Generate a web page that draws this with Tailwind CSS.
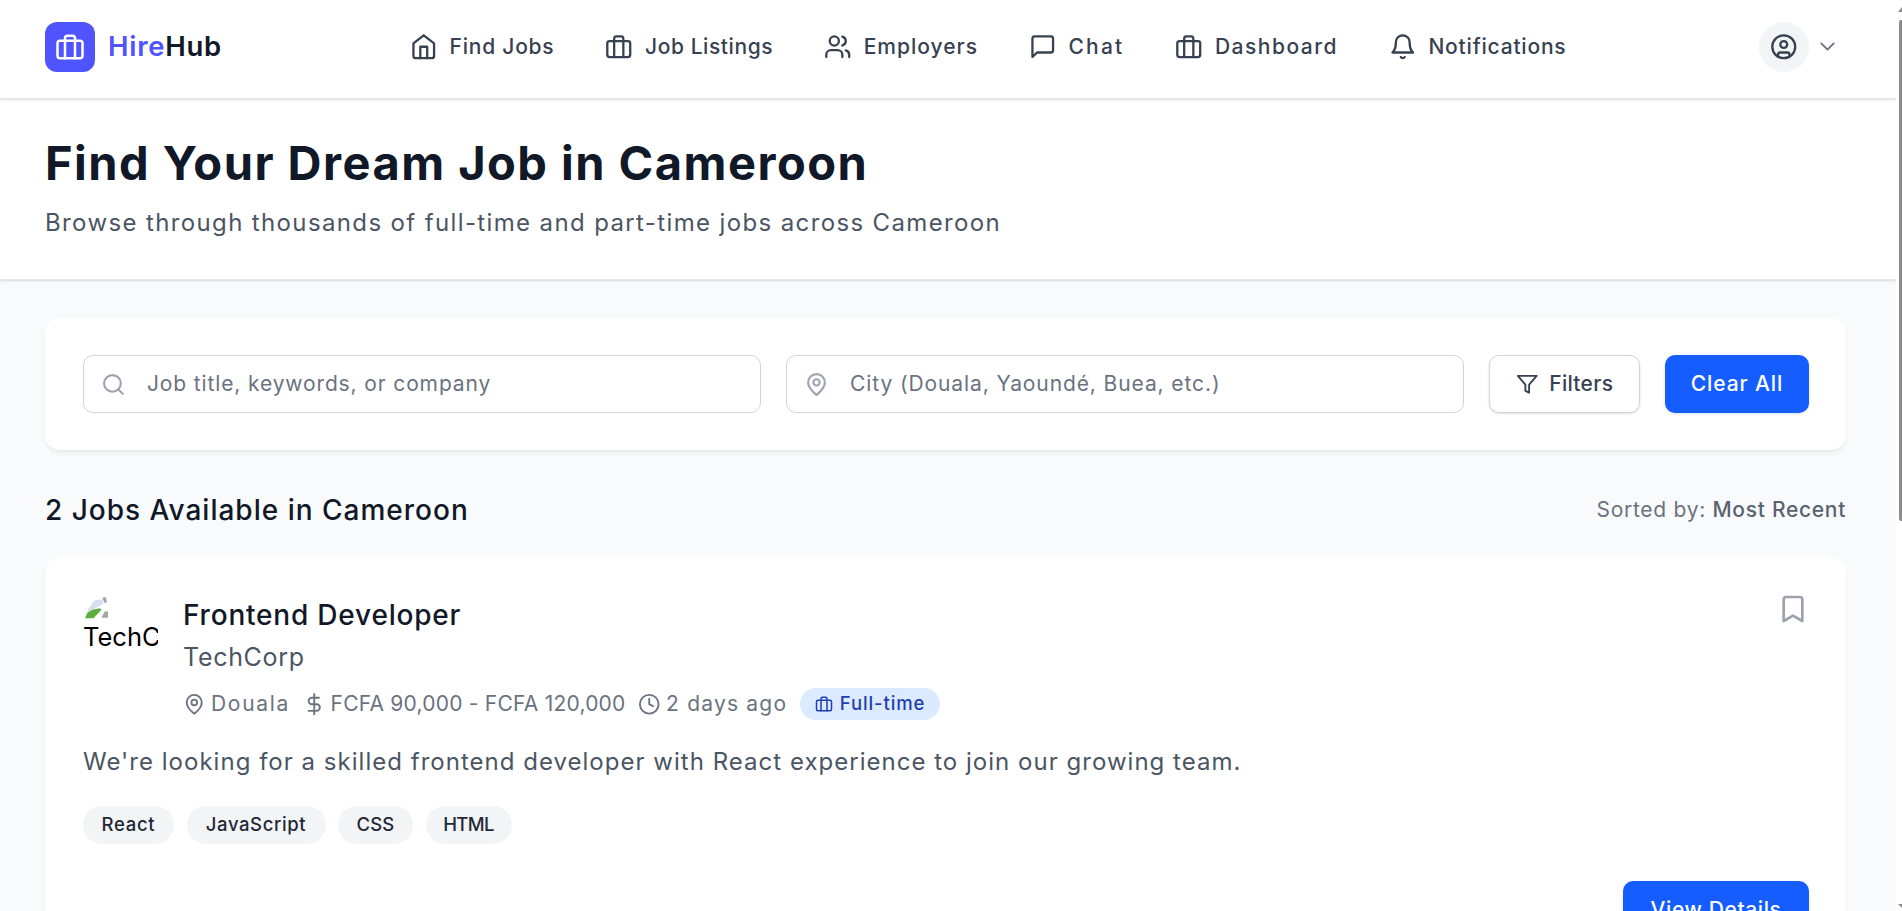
<!DOCTYPE html>
<html lang="en">
<head>
    <meta charset="UTF-8">
    <title>HireHub - Find Jobs</title>
    <script src="https://cdn.jsdelivr.net/npm/@tailwindcss/browser@4"></script>
</head>
<body class="h-[911px] overflow-hidden bg-[#f9fafb] font-['Inter',sans-serif] text-[#111827]">
<div class="flex h-[911px]">
    <div class="w-[1896px] shrink-0 overflow-hidden">
        <!-- header -->
        <header class="relative flex h-[99px] items-center border-b border-[#e5e7eb] bg-white pb-[5px] pl-[45px] pr-[56px] shadow-sm">
            <div class="flex w-[365px] items-center gap-[13px]">
                <div class="flex h-[50px] w-[50px] items-center justify-center rounded-[12px] bg-[#4f54ff] text-white">
                    <svg class="h-[30px] w-[30px]" viewBox="0 0 24 24" fill="none" stroke="currentColor" stroke-width="2" stroke-linecap="round" stroke-linejoin="round"><rect x="2" y="7" width="20" height="14" rx="2"/><path d="M16 21V5a2 2 0 0 0-2-2h-4a2 2 0 0 0-2 2v16"/></svg>
                </div>
                <span class="text-[27.5px] font-semibold tracking-[0.75px]"><span class="text-[#4f54ff]">Hire</span>Hub</span>
            </div>
            <nav class="flex items-center gap-[51px] text-[21px] font-medium text-[#374151]">
                <a class="flex items-center gap-[12px] tracking-[0.78px]">
                    <svg class="h-[27.5px] w-[27.5px]" viewBox="0 0 24 24" fill="none" stroke="currentColor" stroke-width="2" stroke-linecap="round" stroke-linejoin="round"><path d="m3 9 9-7 9 7v11a2 2 0 0 1-2 2H5a2 2 0 0 1-2-2z"/><polyline points="9 22 9 12 15 12 15 22"/></svg>
                    Find Jobs
                </a>
                <a class="flex items-center gap-[12px] tracking-[0.58px]">
                    <svg class="h-[27.5px] w-[27.5px]" viewBox="0 0 24 24" fill="none" stroke="currentColor" stroke-width="2" stroke-linecap="round" stroke-linejoin="round"><rect x="2" y="7" width="20" height="14" rx="2"/><path d="M16 21V5a2 2 0 0 0-2-2h-4a2 2 0 0 0-2 2v16"/></svg>
                    Job Listings
                </a>
                <a class="flex items-center gap-[12px] tracking-[1px]">
                    <svg class="h-[27.5px] w-[27.5px]" viewBox="0 0 24 24" fill="none" stroke="currentColor" stroke-width="2" stroke-linecap="round" stroke-linejoin="round"><path d="M16 21v-2a4 4 0 0 0-4-4H6a4 4 0 0 0-4 4v2"/><circle cx="9" cy="7" r="4"/><path d="M22 21v-2a4 4 0 0 0-3-3.87"/><path d="M16 3.13a4 4 0 0 1 0 7.75"/></svg>
                    Employers
                </a>
                <a class="flex items-center gap-[12px] tracking-[2.2px]">
                    <svg class="h-[27.5px] w-[27.5px]" viewBox="0 0 24 24" fill="none" stroke="currentColor" stroke-width="2" stroke-linecap="round" stroke-linejoin="round"><path d="M21 15a2 2 0 0 1-2 2H7l-4 4V5a2 2 0 0 1 2-2h14a2 2 0 0 1 2 2z"/></svg>
                    Chat
                </a>
                <a class="flex items-center gap-[12px] tracking-[1.5px]">
                    <svg class="h-[27.5px] w-[27.5px]" viewBox="0 0 24 24" fill="none" stroke="currentColor" stroke-width="2" stroke-linecap="round" stroke-linejoin="round"><rect x="2" y="7" width="20" height="14" rx="2"/><path d="M16 21V5a2 2 0 0 0-2-2h-4a2 2 0 0 0-2 2v16"/></svg>
                    Dashboard
                </a>
                <a class="flex items-center gap-[12px] tracking-[0.8px]">
                    <svg class="h-[27.5px] w-[27.5px]" viewBox="0 0 24 24" fill="none" stroke="currentColor" stroke-width="2" stroke-linecap="round" stroke-linejoin="round"><path d="M6 8a6 6 0 0 1 12 0c0 7 3 9 3 9H3s3-2 3-9"/><path d="M10.3 21a1.94 1.94 0 0 0 3.4 0"/></svg>
                    Notifications
                </a>
            </nav>
            <div class="ml-auto flex items-center gap-[6px] text-[#6b7280]">
                <div class="flex h-[50px] w-[50px] items-center justify-center rounded-full bg-[#f3f4f6] text-[#374151]">
                    <svg class="h-[27.5px] w-[27.5px]" viewBox="0 0 24 24" fill="none" stroke="currentColor" stroke-width="2" stroke-linecap="round" stroke-linejoin="round"><circle cx="12" cy="12" r="10"/><circle cx="12" cy="10" r="3"/><path d="M7 20.662V19a2 2 0 0 1 2-2h6a2 2 0 0 1 2 2v1.662"/></svg>
                </div>
                <svg class="h-[25px] w-[25px]" viewBox="0 0 24 24" fill="none" stroke="currentColor" stroke-width="1.8" stroke-linecap="round" stroke-linejoin="round"><path d="m6 9 6 6 6-6"/></svg>
            </div>
        </header>

        <!-- page title -->
        <section class="h-[181px] border-b border-[#e5e7eb] bg-white pl-[45px] pt-[36px] shadow-sm">
            <h1 class="text-[47px] leading-[56px] font-bold tracking-[1.47px] text-[#111827]">Find Your Dream Job in Cameroon</h1>
            <p class="mt-[16px] text-[24px] leading-[32px] tracking-[1.37px] text-[#4b5563]">Browse through thousands of full-time and part-time jobs across Cameroon</p>
        </section>

        <main class="pl-[45px] pr-[50px] pt-[38px]">
            <!-- search -->
            <div class="flex gap-[25px] rounded-[15px] bg-white py-[37px] pl-[38px] pr-[37px] shadow-md shadow-black/5">
                <div class="flex h-[58px] w-[678px] items-center gap-[21px] rounded-[10px] border border-[#d1d5db] px-[17px] text-[#9ca3af]">
                    <svg class="h-[25px] w-[25px] shrink-0" viewBox="0 0 24 24" fill="none" stroke="currentColor" stroke-width="2" stroke-linecap="round" stroke-linejoin="round"><circle cx="11" cy="11" r="8"/><path d="m21 21-4.3-4.3"/></svg>
                    <span class="text-[21px] tracking-[0.87px] text-[#6b7280]">Job title, keywords, or company</span>
                </div>
                <div class="flex h-[58px] w-[678px] items-center gap-[21px] rounded-[10px] border border-[#d1d5db] px-[17px] text-[#9ca3af]">
                    <svg class="h-[25px] w-[25px] shrink-0" viewBox="0 0 24 24" fill="none" stroke="currentColor" stroke-width="2" stroke-linecap="round" stroke-linejoin="round"><path d="M20 10c0 6-8 12-8 12s-8-6-8-12a8 8 0 0 1 16 0Z"/><circle cx="12" cy="10" r="3"/></svg>
                    <span class="text-[21px] tracking-[0.9px] text-[#6b7280]">City (Douala, Yaoundé, Buea, etc.)</span>
                </div>
                <button class="flex h-[58px] w-[151px] items-center justify-center gap-[11px] rounded-[10px] border border-[#d1d5db] bg-white text-[21px] font-medium tracking-[0.3px] text-[#374151] shadow-sm">
                    <svg class="h-[22.5px] w-[22.5px]" viewBox="0 0 24 24" fill="none" stroke="currentColor" stroke-width="2" stroke-linecap="round" stroke-linejoin="round"><polygon points="22 3 2 3 10 12.46 10 19 14 21 14 12.46 22 3"/></svg>
                    Filters
                </button>
                <button class="flex h-[58px] w-[144px] items-center justify-center rounded-[10px] bg-[#165dff] text-[21px] font-medium tracking-[0.9px] text-white shadow-sm">Clear All</button>
            </div>

            <div class="mt-[42px] flex h-[36px] items-center justify-between">
                <h2 class="text-[28px] font-medium tracking-[1px] text-[#111827]">2 Jobs Available in Cameroon</h2>
                <p class="text-[21px] tracking-[0.7px] text-[#6b7280]">Sorted by: <span class="font-medium text-[#596270]">Most Recent</span></p>
            </div>

            <!-- job card -->
            <article class="relative mt-[29px] h-[460px] rounded-[15px] bg-white py-[37px] pl-[38px] pr-[37px] shadow-md shadow-black/5">
                <button class="absolute right-[37px] top-[36px] text-[#9ca3af]">
                    <svg class="h-[32px] w-[32px]" viewBox="0 0 24 24" fill="none" stroke="currentColor" stroke-width="2" stroke-linecap="round" stroke-linejoin="round"><path d="m19 21-7-4-7 4V5a2 2 0 0 1 2-2h10a2 2 0 0 1 2 2v16z"/></svg>
                </button>
                <div class="flex gap-[25px]">
                    <div class="h-[75px] w-[75px] shrink-0 overflow-hidden text-[25.5px] leading-[36px] text-black">
                        <svg class="mt-[3px] ml-[2px] block h-[22px] w-[23px]" viewBox="0 0 70 66"><path d="M6 42 28 10 52 6 56 20 38 30 16 42z" fill="#d5dfee"/><path d="M0 64 8 46Q24 36 46 34L50 38 26 64z" fill="#5cae3f"/><path d="M50 63 60 44 70 44 70 63z" fill="#a0a8a0"/><path d="M52 2 64 0 66 16 60 18z" fill="#9aa3a8"/></svg>
                        TechCorp
                    </div>
                    <div class="min-w-0 flex-1 pt-[3px]">
                        <h3 class="text-[28px] leading-[36px] font-medium tracking-[0.8px] text-[#111827]">Frontend Developer</h3>
                        <p class="mt-[8px] text-[25px] leading-[32px] tracking-[0.7px] text-[#4b5563]">TechCorp</p>
                        <div class="mt-[15px] flex items-center gap-[12.5px] text-[21px] text-[#6b7280]">
                            <span class="flex items-center gap-[5.5px] tracking-[1.7px]">
                                <svg class="h-[22.5px] w-[22.5px]" viewBox="0 0 24 24" fill="none" stroke="currentColor" stroke-width="2" stroke-linecap="round" stroke-linejoin="round"><path d="M20 10c0 6-8 12-8 12s-8-6-8-12a8 8 0 0 1 16 0Z"/><circle cx="12" cy="10" r="3"/></svg>
                                Douala
                            </span>
                            <span class="flex items-center gap-[5.5px] tracking-[0.23px]">
                                <svg class="h-[22.5px] w-[22.5px]" viewBox="0 0 24 24" fill="none" stroke="currentColor" stroke-width="2" stroke-linecap="round" stroke-linejoin="round"><line x1="12" y1="1" x2="12" y2="23"/><path d="M17 5H9.5a3.5 3.5 0 0 0 0 7h5a3.5 3.5 0 0 1 0 7H6"/></svg>
                                FCFA 90,000 - FCFA 120,000
                            </span>
                            <span class="flex items-center gap-[5.5px] tracking-[1.2px]">
                                <svg class="h-[22.5px] w-[22.5px]" viewBox="0 0 24 24" fill="none" stroke="currentColor" stroke-width="2" stroke-linecap="round" stroke-linejoin="round"><circle cx="12" cy="12" r="10"/><polyline points="12 6 12 12 16 14"/></svg>
                                2 days ago
                            </span>
                            <span class="flex h-[32px] items-center gap-[7px] rounded-full bg-[#dbeafe] px-[15px] text-[18.5px] font-medium tracking-[0.9px] text-[#1e40af]">
                                <svg class="h-[18px] w-[18px]" viewBox="0 0 24 24" fill="none" stroke="currentColor" stroke-width="2" stroke-linecap="round" stroke-linejoin="round"><rect x="2" y="7" width="20" height="14" rx="2"/><path d="M16 21V5a2 2 0 0 0-2-2h-4a2 2 0 0 0-2 2v16"/></svg>
                                Full-time
                            </span>
                        </div>
                    </div>
                </div>
                <p class="mt-[24px] text-[24px] leading-[36px] tracking-[1.02px] text-[#4b5563]">We're looking for a skilled frontend developer with React experience to join our growing team.</p>
                <div class="mt-[26px] flex gap-[12.5px] text-[18.5px] font-medium text-[#1f2937]">
                    <span class="flex h-[38px] w-[91px] items-center justify-center rounded-full bg-[#f3f4f6] tracking-[0.7px]">React</span>
                    <span class="flex h-[38px] w-[139px] items-center justify-center rounded-full bg-[#f3f4f6] tracking-[0.6px]">JavaScript</span>
                    <span class="flex h-[38px] w-[75px] items-center justify-center rounded-full bg-[#f3f4f6] tracking-[0.2px]">CSS</span>
                    <span class="flex h-[38px] w-[86px] items-center justify-center rounded-full bg-[#f3f4f6] tracking-[-0.7px]">HTML</span>
                </div>
                <div class="mt-[37px] flex justify-end">
                    <button class="h-[58px] w-[186px] rounded-[10px] bg-[#165dff] text-[21px] font-medium tracking-[0.6px] text-white shadow-sm">View Details</button>
                </div>
            </article>
        </main>
    </div>
    <!-- scrollbar -->
    <div class="relative h-[911px] w-[6px] shrink-0 bg-white">
        <svg class="absolute left-0 top-[7px] h-[5px] w-[6px]" viewBox="0 0 6 5"><polygon points="2,5 6,0 6,5" fill="#8c8c8c"/></svg>
        <div class="absolute right-0 top-[20px] h-[501px] w-[3px] rounded-l-[2px] bg-[#8c8c8c]"></div>
        <svg class="absolute left-0 top-[904px] h-[4px] w-[6px]" viewBox="0 0 6 4"><polygon points="2,0 6,0 6,4" fill="#8c8c8c"/></svg>
    </div>
</div>
</body>
</html>
